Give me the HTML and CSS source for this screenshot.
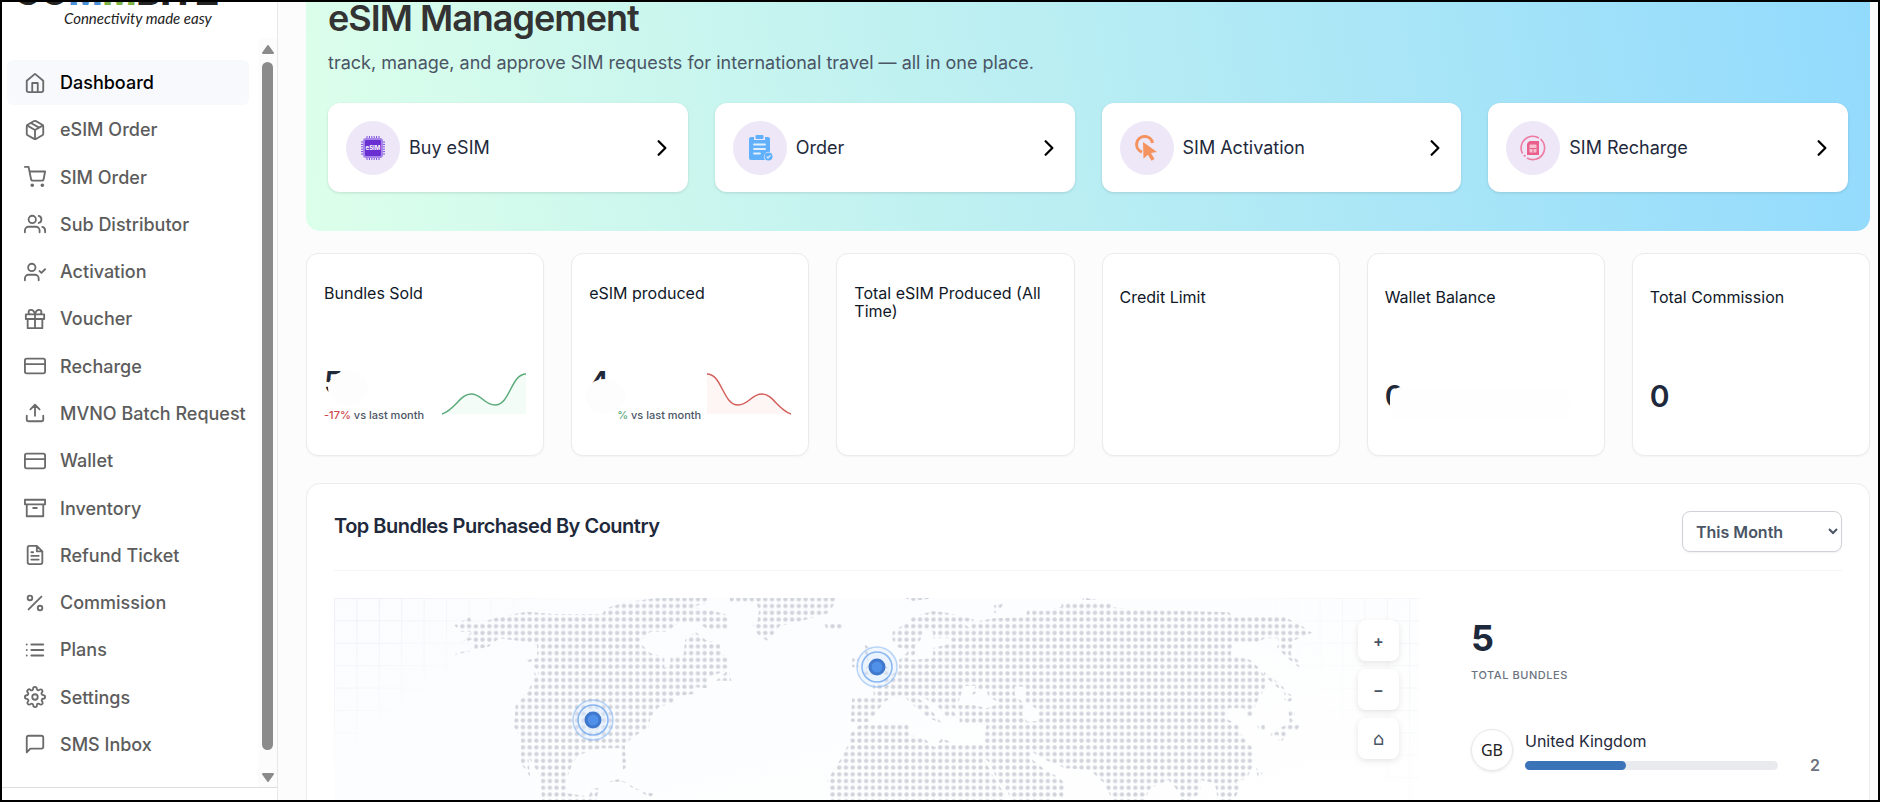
FILE: index.html
```html
<!DOCTYPE html>
<html lang="en">
    <head>
        <meta charset="UTF-8" />
        <title>eSIM Management</title>
        <meta name="viewport" content="width=device-width, initial-scale=1.0" />
        <link rel="stylesheet" href="styles.css">
    </head>
    <body>
        <aside class="sidebar">
            <div class="brand">
                <div class="brand-name">CO<span class="blue">M</span><span class="green">M</span>BITZ</div>
                <div class="brand-tagline">Connectivity made easy</div>
            </div>
            <div class="menu-wrap">
                <nav class="menu">
                    <a href="#" class="menu-item active">
                        <svg viewBox="0 0 24 24"><path d="M3 9.5 12 2l9 7.500V20a2 2 0 0 1-2 2H5a2 2 0 0 1-2-2z" /><path d="M9 22V12h6v10" /></svg>
                        Dashboard
                    </a>
                    <a href="#" class="menu-item">
                        <svg viewBox="0 0 24 24"><path d="M21 16V8a2 2 0 0 0-1-1.730l-7-4a2 2 0 0 0-2 0l-7 4A2 2 0 0 0 3 8v8a2 2 0 0 0 1 1.730l7 4a2 2 0 0 0 2 0l7-4A2 2 0 0 0 21 16z" /><path d="M3.300 7 12 12l8.700-5M12 22V12M7.500 4.300l9 5.100" /></svg>
                        eSIM Order
                    </a>
                    <a href="#" class="menu-item">
                        <svg viewBox="0 0 24 24"><circle cx="9" cy="21" r="1" /><circle cx="20" cy="21" r="1" /><path d="M1 1h4l2.700 13.400a2 2 0 0 0 2 1.600h9.700a2 2 0 0 0 2-1.600L23 6H6" /></svg>
                        SIM Order
                    </a>
                    <a href="#" class="menu-item">
                        <svg viewBox="0 0 24 24"><path d="M17 21v-2a4 4 0 0 0-4-4H5a4 4 0 0 0-4 4v2" /><circle cx="9" cy="7" r="4" /><path d="M23 21v-2a4 4 0 0 0-3-3.870M16 3.130a4 4 0 0 1 0 7.750" /></svg>
                        Sub Distributor
                    </a>
                    <a href="#" class="menu-item">
                        <svg viewBox="0 0 24 24"><path d="M16 21v-2a4 4 0 0 0-4-4H5a4 4 0 0 0-4 4v2" /><circle cx="8.500" cy="7" r="4" /><path d="m17 11 2 2 4-4" /></svg>
                        Activation
                    </a>
                    <a href="#" class="menu-item">
                        <svg viewBox="0 0 24 24"><path d="M20 12v10H4V12M2 7h20v5H2zM12 22V7M12 7H7.500a2.500 2.500 0 0 1 0-5C11 2 12 7 12 7zM12 7h4.500a2.500 2.500 0 0 0 0-5C13 2 12 7 12 7z" /></svg>
                        Voucher
                    </a>
                    <a href="#" class="menu-item">
                        <svg viewBox="0 0 24 24"><rect x="1" y="4" width="22" height="16" rx="2" /><path d="M1 10h22" /></svg>
                        Recharge
                    </a>
                    <a href="#" class="menu-item">
                        <svg viewBox="0 0 24 24"><path d="M21 15v4a2 2 0 0 1-2 2H5a2 2 0 0 1-2-2v-4M17 8l-5-5-5 5M12 3v12" /></svg>
                        MVNO Batch Request
                    </a>
                    <a href="#" class="menu-item">
                        <svg viewBox="0 0 24 24"><rect x="1" y="4" width="22" height="16" rx="2" /><path d="M1 10h22" /></svg>
                        Wallet
                    </a>
                    <a href="#" class="menu-item">
                        <svg viewBox="0 0 24 24"><path d="M21 8v13H3V8M1 3h22v5H1zM10 12h4" /></svg>
                        Inventory
                    </a>
                    <a href="#" class="menu-item">
                        <svg viewBox="0 0 24 24"><path d="M14 2H6a2 2 0 0 0-2 2v16a2 2 0 0 0 2 2h12a2 2 0 0 0 2-2V8zM14 2v6h6M16 13H8M16 17H8M10 9H8" /></svg>
                        Refund Ticket
                    </a>
                    <a href="#" class="menu-item">
                        <svg viewBox="0 0 24 24"><path d="M19 5 5 19" /><circle cx="6.500" cy="6.500" r="2.500" /><circle cx="17.500" cy="17.500" r="2.500" /></svg>
                        Commission
                    </a>
                    <a href="#" class="menu-item">
                        <svg viewBox="0 0 24 24"><path d="M8 6h13M8 12h13M8 18h13M3 6h.01M3 12h.01M3 18h.01" /></svg>
                        Plans
                    </a>
                    <a href="#" class="menu-item">
                        <svg viewBox="0 0 24 24"><circle cx="12" cy="12" r="3" /><path d="M19.400 15a1.650 1.650 0 0 0 .33 1.820l.06.06a2 2 0 1 1-2.830 2.830l-.06-.06a1.650 1.650 0 0 0-2.800 1.170V21a2 2 0 0 1-4 0v-.09A1.650 1.650 0 0 0 9 19.400a1.650 1.650 0 0 0-1.820.33l-.06.06a2 2 0 1 1-2.830-2.830l.06-.06a1.650 1.650 0 0 0-1.170-2.800H3a2 2 0 0 1 0-4h.09A1.650 1.650 0 0 0 4.600 9a1.650 1.650 0 0 0-.33-1.820l-.06-.06a2 2 0 1 1 2.830-2.830l.06.06a1.650 1.650 0 0 0 2.800-1.170V3a2 2 0 0 1 4 0v.09a1.650 1.650 0 0 0 2.800 1.170l.06-.06a2 2 0 1 1 2.830 2.830l-.06.06a1.650 1.650 0 0 0 1.170 2.800H21a2 2 0 0 1 0 4h-.09a1.650 1.650 0 0 0-1.510 1z" /></svg>
                        Settings
                    </a>
                    <a href="#" class="menu-item">
                        <svg viewBox="0 0 24 24"><path d="M21 15a2 2 0 0 1-2 2H7l-4 4V5a2 2 0 0 1 2-2h14a2 2 0 0 1 2 2z" /></svg>
                        SMS Inbox
                    </a>
                </nav>
                <div class="scrollbar">
                    <svg class="scroll-arrow" viewBox="0 0 12 9"><path d="M6 1 11 8H1z" /></svg>
                    <div class="scroll-thumb"></div>
                    <svg class="scroll-arrow" viewBox="0 0 12 9"><path d="M6 8 1 1h10z" /></svg>
                </div>
            </div>
            <div class="sidebar-footer"></div>
        </aside>

        <main class="content">
            <section class="banner">
                <h1 class="banner-title">eSIM Management</h1>
                <p class="banner-text">track, manage, and approve SIM requests for international travel — all in one place.</p>
                <div class="actions">
                    <a href="#" class="action-card">
                        <span class="action-icon">
                            <svg viewBox="0 0 26 26">
                                <path d="M7 1v24M9.400 1v24M11.800 1v24M14.200 1v24M16.600 1v24M19 1v24M1 7h24M1 9.400h24M1 11.800h24M1 14.200h24M1 16.600h24M1 19h24" stroke="#7c4ddb" stroke-width="1" />
                                <rect x="3" y="3" width="20" height="20" rx="3" fill="#a585ea" />
                                <rect x="5" y="5" width="16" height="16" rx="1" fill="#6a2fd0" />
                                <text x="13" y="15" class="chip-text">eSIM</text>
                            </svg>
                        </span>
                        <span class="action-label">Buy eSIM</span>
                        <svg class="chevron" viewBox="0 0 10 16"><path d="m2 2 6 6-6 6" /></svg>
                    </a>
                    <a href="#" class="action-card">
                        <span class="action-icon">
                            <svg viewBox="0 0 26 26">
                                <path d="M4 2h3v3h11V2h3a2 2 0 0 1 2 2v13a5 5 0 0 0-5 8H4a2 2 0 0 1-2-2V4a2 2 0 0 1 2-2z" fill="#61b0fb" />
                                <rect x="8.500" y="0" width="8" height="4" rx="1" fill="#61b0fb" />
                                <path d="M7 9.500h11M7 14h11M7 18.500h6" stroke="#e4effd" stroke-width="1.800" stroke-linecap="round" />
                                <circle cx="21.500" cy="21.500" r="4" fill="#61b0fb" />
                                <path d="m19.600 21.600 1.400 1.400 2.500-2.700" stroke="#e4effd" stroke-width="1.200" fill="none" />
                            </svg>
                        </span>
                        <span class="action-label">Order</span>
                        <svg class="chevron" viewBox="0 0 10 16"><path d="m2 2 6 6-6 6" /></svg>
                    </a>
                    <a href="#" class="action-card">
                        <span class="action-icon">
                            <svg viewBox="0 0 26 26">
                                <path d="M8 17A8 8 0 1 1 18.500 8" fill="none" stroke="#f4935f" stroke-width="3" />
                                <path d="m9 7 14 10-6 1 3.500 6-3 1.700-3.500-6-4.500 3.800z" fill="#f4935f" />
                            </svg>
                        </span>
                        <span class="action-label">SIM Activation</span>
                        <svg class="chevron" viewBox="0 0 10 16"><path d="m2 2 6 6-6 6" /></svg>
                    </a>
                    <a href="#" class="action-card">
                        <span class="action-icon">
                            <svg viewBox="0 0 26 26">
                                <path d="M2.500 18.500A11.700 11.700 0 0 1 19 3M20.500 4A11.700 11.700 0 0 1 7 23M5.500 21.500 3.800 20.200" fill="none" stroke="#ee7ba0" stroke-width="1.600" />
                                <path d="M9.500 6H19v14H7V8.500z" fill="#ea5f8c" />
                                <rect x="9.500" y="9.500" width="7" height="8" rx="1" fill="#f7bfd2" />
                                <path d="M9.500 13.500h7M13 13.500v4" stroke="#ea5f8c" stroke-width="1" />
                            </svg>
                        </span>
                        <span class="action-label">SIM Recharge</span>
                        <svg class="chevron" viewBox="0 0 10 16"><path d="m2 2 6 6-6 6" /></svg>
                    </a>
                </div>
            </section>

            <section class="stats">
                <div class="stat-card">
                    <h2 class="stat-title">Bundles Sold</h2>
                    <div class="stat-row">
                        <div>
                            <div class="stat-value masked">5</div>
                            <div class="stat-trend"><span class="down">-17%</span> vs last month</div>
                        </div>
                        <svg class="sparkline" viewBox="0 0 84 42">
                            <path class="area-green" d="M0 41C14 36 18 21 29 21S42 32 53 32C68 32 69 1 84 1V41z" />
                            <path class="line-green" d="M0 41C14 36 18 21 29 21S42 32 53 32C68 32 69 1 84 1" />
                        </svg>
                    </div>
                </div>
                <div class="stat-card">
                    <h2 class="stat-title">eSIM produced</h2>
                    <div class="stat-row">
                        <div>
                            <div class="stat-value masked masked-low">4</div>
                            <div class="stat-trend trend-right"><span class="up">%</span> vs last month</div>
                        </div>
                        <svg class="sparkline" viewBox="0 0 84 42">
                            <path class="area-red" d="M0 1C15 1 16 32 31 32C42 32 44 21 55 21S70 36 84 41H0z" />
                            <path class="line-red" d="M0 1C15 1 16 32 31 32C42 32 44 21 55 21S70 36 84 41" />
                        </svg>
                    </div>
                </div>
                <div class="stat-card">
                    <h2 class="stat-title">Total eSIM Produced (All Time)</h2>
                </div>
                <div class="stat-card plain">
                    <h2 class="stat-title">Credit Limit</h2>
                </div>
                <div class="stat-card plain">
                    <h2 class="stat-title">Wallet Balance</h2>
                    <div class="stat-value masked masked-balance">0</div>
                </div>
                <div class="stat-card plain">
                    <h2 class="stat-title">Total Commission</h2>
                    <div class="stat-value">0</div>
                </div>
            </section>

            <section class="panel">
                <div class="panel-header">
                    <h2 class="panel-title">Top Bundles Purchased By Country</h2>
                    <select class="period" aria-label="Period">
                        <option>This Month</option>
                        <option>Last Month</option>
                        <option>This Year</option>
                    </select>
                </div>
                <div class="panel-body">
                    <div class="map">
                        <svg class="map-svg" viewBox="0 0 1085 260">
                            <defs>
                                <pattern id="dots" x="-2.860" y="-2.060" width="6.730" height="6.730" patternUnits="userSpaceOnUse">
                                    <circle cx="3.360" cy="3.360" r="2.200" fill="#d2d4dc" />
                                </pattern>
                                <pattern id="grid" width="22.400" height="22.400" patternUnits="userSpaceOnUse">
                                    <path d="M0 0H22.400M0 0V22.400" stroke="#eef0f4" stroke-width="2" />
                                </pattern>
                                <linearGradient id="map-bg" x1="0" y1="0" x2="1" y2="1">
                                    <stop offset="0" stop-color="#fbfcfe" />
                                    <stop offset="1" stop-color="#ffffff" />
                                </linearGradient>
                                <linearGradient id="fade-left" gradientUnits="userSpaceOnUse" x1="0" y1="0" x2="85" y2="110">
                                    <stop offset="0.200" stop-color="#fff" />
                                    <stop offset="1" stop-color="#000" />
                                </linearGradient>
                                <linearGradient id="fade-right" gradientUnits="userSpaceOnUse" x1="1085" y1="0" x2="960" y2="90">
                                    <stop offset="0.200" stop-color="#999" />
                                    <stop offset="1" stop-color="#000" />
                                </linearGradient>
                                <mask id="corner-left"><rect width="400" height="260" fill="url(#fade-left)" /></mask>
                                <mask id="corner-right"><rect x="700" width="385" height="260" fill="url(#fade-right)" /></mask>
                                <clipPath id="land">
                                    <!-- Americas -->
                                    <path transform="translate(-14 -18) scale(.3444 .3333)" d="M390 136 435 112 445 135 520 110 600 95 680 102 820 102 830 85 880 68 970 55 1130 50 1130 70 1080 80 1150 95 1185 105 1185 150 1130 150 1090 125 1040 130 1010 155 960 155 925 185 960 220 1000 230 1000 262 1015 262 1018 232 1055 230 1060 180 1090 155 1120 180 1160 190 1165 220 1185 235 1185 265 1195 302 1150 302 1185 270 1130 290 1125 325 1090 322 1085 342 1030 350 1025 370 985 380 960 410 955 440 905 475 885 495 890 560 880 570 875 505 815 505 750 525 730 560 715 600 720 640 780 650 790 625 810 625 800 670 645 670 640 590 605 530 610 590 583 550 583 470 563 440 568 375 600 340 615 310 620 270 635 300 632 270 600 240 630 235 630 195 600 185 520 175 490 200 388 225 450 200 440 180 415 185 440 155 410 155zM838 605 865 597 900 612 915 625 970 642 960 650 920 632 880 605z" />
                                    <!-- Greenland and Iceland -->
                                    <path transform="translate(-14 -18) scale(.3444 .3333)" d="M1190 50H1500L1490 78 1475 100 1400 122 1335 138 1315 165 1298 182 1272 165 1255 130 1270 125 1275 90 1265 65 1190 65zM1465 132H1520V146H1470z" />
                                    <!-- Europe, Africa and Asia -->
                                    <path transform="translate(506 -18) scale(.357 .3333)" d="M170 50H250V56L205 63zM680 52 720 60 680 60zM432 75 460 70 440 98 460 98 432 98zM70 195 90 205 85 240 140 265 135 285 62 285 80 250 70 220zM34 235H52V262H34zM92 315 120 300 165 270 165 240 190 215 160 200 147 180 147 155 185 130 205 110 260 93 292 97 375 118 365 145 340 125 378 125 430 115 520 112 525 90 575 92 620 80 620 70 760 70 765 82 850 90 960 92 1090 97 1100 112 1245 110 1290 135 1322 158 1270 182 1262 220 1290 250 1292 268 1260 240 1225 205 1228 175 1190 175 1175 185 1100 185 1095 225 1150 240 1170 260 1190 290 1190 325 1175 350 1160 385 1160 408 1140 408 1130 385 1090 385 1080 415 1115 435 1125 465 1160 510 1160 550 1140 595 1110 605 1120 625 1100 670H1060L1050 610 1010 600 1010 640 960 670 940 625 920 600 870 625 850 665H765L740 610 700 570 630 565 610 555 575 540 530 510 540 540 575 570 610 590 630 610 625 650 560 670 480 665 470 635 440 600 420 550 400 530 430 590 460 640 460 670H-25L-35 600 0 540 25 490 30 460 55 435 115 435 190 432 195 465 235 475 265 502 285 475 330 495 400 490 410 435 335 427 335 395 310 380 330 415 300 412 270 375 220 345 205 345 240 370 270 410 285 430 250 415 210 380 175 345 150 350 125 365 100 400 80 427 30 425 34 355 95 350zM235 150 225 180 210 200 210 222 190 240 260 235 260 205 310 190 310 175 260 175 260 155zM340 340 330 375 375 375 410 385 450 370 415 350 410 325 370 345 380 318 345 318zM490 320 520 320 520 365 555 390 555 422 525 425 510 400 520 375 490 345z" clip-rule="evenodd" />
                                    <!-- Japan and Kamchatka islands -->
                                    <path transform="translate(506 -18) scale(.357 .3333)" d="M1190 275 1245 325 1240 335 1185 285zM1245 335 1275 350 1260 365 1245 360zM1255 385 1275 395 1272 425 1290 435 1280 450 1240 448 1255 465 1230 490 1225 465 1205 470 1210 455 1260 430zM1168 430H1190V450H1172zM1165 565 1185 575 1172 600z" />
                                </clipPath>
                            </defs>
                            <rect width="1085" height="260" fill="url(#map-bg)" />
                            <rect width="400" height="260" fill="url(#grid)" mask="url(#corner-left)" />
                            <rect x="700" width="385" height="260" fill="url(#grid)" mask="url(#corner-right)" />
                            <g clip-path="url(#land)"><rect width="1085" height="260" fill="url(#dots)" /></g>
                            <g class="pin" transform="translate(259 122)">
                                <circle class="ring-outer" r="20" />
                                <circle class="ring-inner" r="15" />
                                <circle class="pin-edge" r="8.500" />
                                <circle class="pin-core" r="5.500" />
                            </g>
                            <g class="pin" transform="translate(543 69)">
                                <circle class="ring-outer" r="20" />
                                <circle class="ring-inner" r="15" />
                                <circle class="pin-edge" r="8.500" />
                                <circle class="pin-core" r="5.500" />
                            </g>
                        </svg>
                        <div class="map-controls">
                            <button class="map-btn" aria-label="Zoom in">+</button>
                            <button class="map-btn" aria-label="Zoom out">−</button>
                            <button class="map-btn home" aria-label="Reset view">⌂</button>
                        </div>
                    </div>
                    <div class="summary">
                        <div class="total">5</div>
                        <div class="total-label">TOTAL BUNDLES</div>
                        <div class="country">
                            <div class="flag">GB</div>
                            <div class="country-info">
                                <div class="country-name">United Kingdom</div>
                                <div class="country-row">
                                    <div class="bar"><div class="bar-fill" style="width: 40%"></div></div>
                                    <div class="country-count">2</div>
                                </div>
                            </div>
                        </div>
                    </div>
                </div>
            </section>
        </main>
    </body>
</html>
```
FILE: styles.css
```css
* {
    margin: 0;
    padding: 0;
    box-sizing: border-box;
}

body {
    font-family: Inter, "Liberation Sans", sans-serif;
    background: #fcfcfd;
    color: #1e293b;
    height: 100vh;
    display: flex;
    border: 2px solid #000;
    overflow: hidden;
}

a {
    color: inherit;
    text-decoration: none;
}

.sidebar {
    flex: 0 0 276px;
    display: flex;
    flex-direction: column;
    background: #fff;
    border-right: 1px solid #e8e8ea;
}

/* the logo is scrolled half out of view */
.brand {
    height: 36px;
    flex-shrink: 0;
    display: flex;
    flex-direction: column;
    justify-content: flex-end;
    padding: 0 0 10px 12px;
    overflow: hidden;
}

.brand-name {
    font-size: 36px;
    line-height: 32px;
    font-weight: 800;
    color: #222;
}

.brand-name .blue {
    color: #4a90d9;
}

.brand-name .green {
    color: #7cb342;
}

.brand-tagline {
    padding-left: 50px;
    font-family: Lato, sans-serif;
    font-size: 15px;
    line-height: 20px;
    font-style: italic;
    color: #222;
}

.menu-wrap {
    flex: 1;
    min-height: 0;
    display: flex;
}

.menu {
    flex: 1;
    display: flex;
    flex-direction: column;
    justify-content: space-between;
    padding: 22px 9px 20px 5px;
}

.menu-item {
    height: 45px;
    display: flex;
    align-items: center;
    gap: 14px;
    padding: 0 0 0 17px;
    border-radius: 6px;
    font-size: 18px;
    font-weight: 500;
    color: #5c5c5c;
    white-space: nowrap;
}

.menu-item.active {
    background: #f8f9fc;
    color: #000;
}

.menu-item svg {
    width: 22px;
    height: 22px;
    fill: none;
    stroke: #6b6b6b;
    stroke-width: 2;
    stroke-linecap: round;
    stroke-linejoin: round;
}

.scrollbar {
    width: 19px;
    display: flex;
    flex-direction: column;
    align-items: center;
    gap: 8px;
    padding: 7px 0 5px;
    background: #fcfcfc;
}

.scroll-arrow {
    width: 12px;
    height: 9px;
    fill: #8b8b8b;
    stroke: #8b8b8b;
    stroke-width: 2;
    stroke-linejoin: round;
}

.scroll-thumb {
    flex: 1;
    width: 11px;
    margin-bottom: 15px;
    border-radius: 6px;
    background: #8b8b8b;
}

.sidebar-footer {
    height: 13px;
    flex-shrink: 0;
    border-top: 1px solid #ddd;
}

.content {
    flex: 1;
    min-width: 0;
    padding: 0 8px 0 28px;
}

.banner {
    padding: 0 22px 39px;
    border-radius: 0 0 14px 14px;
    background: linear-gradient(80deg, #dcffea 0%, #b8edf3 50%, #92dafd 100%);
}

.banner-title {
    font-size: 36px;
    line-height: 32px;
    font-weight: 600;
    color: #333;
    letter-spacing: -1px;
}

.banner-text {
    margin-top: 17px;
    font-size: 18px;
    line-height: 24px;
    color: #4a5565;
}

.actions {
    display: grid;
    grid-template-columns: repeat(4, 1fr);
    gap: 27px;
    margin-top: 28px;
}

.action-card {
    height: 89px;
    display: flex;
    align-items: center;
    gap: 9px;
    padding: 0 20px 0 18px;
    background: #fff;
    border-radius: 12px;
    box-shadow: 0 1px 3px rgba(0, 0, 0, 0.12);
    font-size: 18px;
}

.action-icon {
    width: 54px;
    height: 54px;
    display: flex;
    align-items: center;
    justify-content: center;
    border-radius: 50%;
    background: #ede7f8;
}

.action-icon svg {
    width: 26px;
    height: 26px;
}

.chip-text {
    font-size: 6px;
    font-weight: 700;
    fill: #fff;
    text-anchor: middle;
}

.action-label {
    flex: 1;
}

.chevron {
    width: 12px;
    height: 18px;
    fill: none;
    stroke: #000;
    stroke-width: 2;
    stroke-linecap: round;
    stroke-linejoin: round;
}

.stats {
    display: grid;
    grid-template-columns: repeat(6, 1fr);
    gap: 27px;
    margin-top: 22px;
}

.stat-card {
    height: 203px;
    display: flex;
    flex-direction: column;
    justify-content: space-between;
    padding: 30px 17px 32px;
    background: #fff;
    border: 1px solid #ebebed;
    border-radius: 12px;
    box-shadow: 0 1px 2px rgba(0, 0, 0, 0.04);
}

.stat-card.plain {
    padding: 34px 17px 42px;
}

.stat-title {
    font-size: 16px;
    line-height: 18px;
    font-weight: 400;
    color: #101828;
}

.stat-row {
    display: flex;
    align-items: center;
    justify-content: space-between;
}

.stat-value {
    font-size: 30px;
    line-height: 34px;
    font-weight: 600;
}

.stat-row .stat-value {
    margin-bottom: 8px;
}

.stat-trend {
    font-size: 11px;
    line-height: 16px;
    font-weight: 500;
    color: #4a5565;
    white-space: nowrap;
}

.trend-right {
    padding-left: 28px;
}

.down {
    color: #d04848;
}

.up {
    color: #5aaa7a;
}

/* hidden amounts */
.masked {
    position: relative;
}

.masked::after {
    content: "";
    position: absolute;
    left: 4px;
    top: 6px;
    width: 40px;
    height: 34px;
    border-radius: 50%;
    background: #fdfdfd;
}

.masked-low::after {
    left: -4px;
    top: 14px;
}

.masked-balance::after {
    left: 5px;
    top: 8px;
    width: 180px;
    border-radius: 12px;
    background: #fefefe;
}

.sparkline {
    width: 84px;
    height: 42px;
    flex-shrink: 0;
    fill: none;
    stroke-width: 1.5;
}

.line-green {
    stroke: #5aaa7a;
}

.area-green {
    fill: #f3fcf6;
}

.line-red {
    stroke: #d4605c;
}

.area-red {
    fill: #fef6f5;
}

.panel {
    margin-top: 27px;
    padding: 27px;
    background: #fff;
    border: 1px solid #ebebed;
    border-radius: 14px;
}

.panel-header {
    display: flex;
    align-items: flex-start;
    justify-content: space-between;
    padding-bottom: 18px;
    border-bottom: 1px solid #f3f4f6;
}

.panel-title {
    font-size: 20px;
    line-height: 30px;
    font-weight: 600;
    letter-spacing: -0.025em;
}

.period {
    width: 160px;
    height: 41px;
    padding: 0 0 0 9px;
    border: 1px solid #cfd2d8;
    border-radius: 8px;
    background: #fff;
    box-shadow: 0 1px 2px rgba(0, 0, 0, 0.06);
    font-family: inherit;
    font-size: 16px;
    font-weight: 600;
    color: #4a5565;
}

.panel-body {
    display: flex;
    gap: 52px;
    margin-top: 27px;
}

.map {
    position: relative;
    flex: 1;
}

.map-svg {
    display: block;
    width: 100%;
}

.ring-outer,
.ring-inner {
    fill: rgba(219, 234, 254, 0.3);
    stroke: #5b9bee;
    stroke-width: 1.5;
}

.ring-outer {
    stroke-opacity: 0.4;
}

.ring-inner {
    stroke-opacity: 0.7;
}

.pin-edge {
    fill: #3f78cc;
}

.pin-core {
    fill: #5090e8;
}

.map-controls {
    position: absolute;
    top: 22px;
    right: 20px;
    display: flex;
    flex-direction: column;
    gap: 8px;
}

.map-btn {
    width: 41px;
    height: 41px;
    border: none;
    border-radius: 8px;
    background: #fff;
    box-shadow: 0 2px 6px rgba(0, 0, 0, 0.1);
    font-family: Inter, "DejaVu Sans", sans-serif;
    font-size: 16px;
    font-weight: 600;
    color: #4a5565;
}

.map-btn.home {
    font-family: "DejaVu Sans", sans-serif;
    font-size: 18px;
    font-weight: 400;
}

.summary {
    flex: 0 0 371px;
    padding: 20px 22px 0 0;
}

.total {
    font-size: 36px;
    line-height: 40px;
    font-weight: 700;
}

.total-label {
    margin-top: 8px;
    font-size: 11px;
    line-height: 18px;
    font-weight: 500;
    color: #6b7280;
    letter-spacing: 0.05em;
}

.country {
    display: flex;
    gap: 12px;
    margin-top: 45px;
}

.flag {
    flex: 0 0 42px;
    height: 42px;
    display: flex;
    align-items: center;
    justify-content: center;
    border: 1px solid #e5e7eb;
    border-radius: 50%;
    box-shadow: 0 1px 3px rgba(0, 0, 0, 0.1);
    font-family: "Noto Sans", sans-serif;
    font-size: 16px;
    color: #222;
}

.country-info {
    flex: 1;
}

.country-name {
    font-size: 16px;
    line-height: 24px;
}

.country-row {
    display: flex;
    align-items: center;
    gap: 32px;
}

.bar {
    flex: 1;
    height: 9px;
    border-radius: 5px;
    background: #e8eaed;
}

.bar-fill {
    height: 100%;
    border-radius: 5px;
    background: #3b73b9;
}

.country-count {
    font-size: 16px;
    line-height: 24px;
    font-weight: 600;
    color: #6b7280;
}
```
